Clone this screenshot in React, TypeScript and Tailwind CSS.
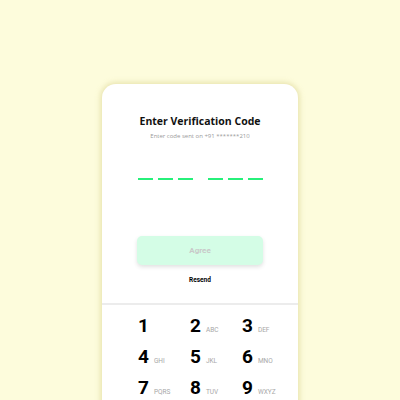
const keys = [
  { d: "1", l: "" },
  { d: "2", l: "ABC" },
  { d: "3", l: "DEF" },
  { d: "4", l: "GHI" },
  { d: "5", l: "JKL" },
  { d: "6", l: "MNO" },
  { d: "7", l: "PQRS" },
  { d: "8", l: "TUV" },
  { d: "9", l: "WXYZ" },
];

const Dash = () => <div className="h-[2px] w-[15px] bg-[#27f07a]" />;

const App = () => {
  return (
    <div className="flex h-[400px] w-[400px] justify-center overflow-hidden bg-[#fdfcdc] pt-[84px] font-['Open_Sans',sans-serif]">
      <div className="flex min-h-[340px] w-[196px] shrink-0 flex-col rounded-t-[14px] bg-white shadow-[0_0_5px_2px_rgba(225,220,160,0.7)]">
        <div className="mt-[29px] text-center text-[10.5px] leading-[16px] font-bold text-[#111]">
          Enter Verification Code
        </div>
        <div className="mt-[2px] text-center text-[6px] leading-[10px] text-[#9a9a9a]">
          Enter code sent on +91 *******210
        </div>

        <div className="mt-[37px] flex justify-center gap-[15px]">
          <div className="flex gap-[5px]">
            <Dash />
            <Dash />
            <Dash />
          </div>
          <div className="flex gap-[5px]">
            <Dash />
            <Dash />
            <Dash />
          </div>
        </div>

        <div className="mx-auto mt-[56px] flex h-[29px] w-[126px] shrink-0 items-center justify-center rounded-[5px] bg-[#d4fde6] shadow-[0_2px_4px_rgba(0,0,0,0.12)] font-['Roboto',sans-serif] text-[8px] font-bold text-[#c9c9c9]">
          Agree
        </div>

        <div className="mt-[10px] text-center font-['Roboto',sans-serif] text-[6.5px] leading-[10px] font-bold text-black">
          Resend
        </div>

        <div className="mt-[18px] border-t-2 border-[#ececec] pl-[36px] pt-[9px] font-['Roboto',sans-serif]">
          <div className="grid grid-cols-[52px_52px_52px] gap-y-[8px]">
            {keys.map((k, i) => (
              <div key={i} className="flex h-[23px] items-baseline gap-[5px]">
                <span className="text-[19px] leading-[23px] font-bold text-black">{k.d}</span>
                {k.l && (
                  <span className="text-[6.5px] leading-[23px] text-[#a8a8a8]">{k.l}</span>
                )}
              </div>
            ))}
          </div>
        </div>
      </div>
    </div>
  );
};

export default App;
